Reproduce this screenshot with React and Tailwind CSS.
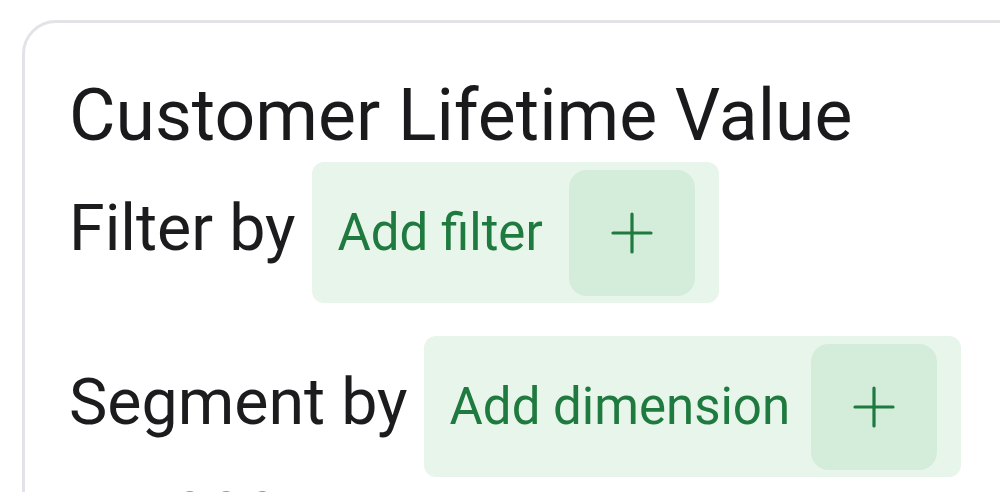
import React from 'react';

const PlusIcon = () => (
  <svg width="42" height="42" viewBox="0 0 42 42" fill="none" stroke="#1f7a3f" strokeWidth="3.2" strokeLinecap="round">
    <line x1="21" y1="2" x2="21" y2="40" />
    <line x1="2" y1="21" x2="40" y2="21" />
  </svg>
);

const AddPill = ({ label, gap }) => (
  <button className={`flex items-center h-[141px] pl-[26px] pr-[24px] rounded-[12px] bg-[#e8f5eb] ${gap}`}>
    <span className="text-[51px] leading-none text-[#1f7a3f]">{label}</span>
    <span className="flex items-center justify-center w-[126px] h-[126px] rounded-[18px] bg-[#d4ecda]">
      <PlusIcon />
    </span>
  </button>
);

const Row = ({ label, action, gap, className }) => (
  <div className={`flex items-baseline gap-[16px] ${className}`}>
    <span className="text-[64.5px] leading-[76px] text-[#1c1c1f]">{label}</span>
    <AddPill label={action} gap={gap} />
  </div>
);

export default function App() {
  return (
    <div className="w-[1000px] h-[492px] overflow-hidden bg-white font-['Roboto',sans-serif]">
      <div className="ml-[22px] mt-[20px] w-[1100px] h-[600px] rounded-[34px] border-[3px] border-[#e2e3e6] pl-[44px] pt-[50px]">
        <h1 className="text-[71.5px] leading-[85px] text-[#1a1a1d]">Customer Lifetime Value</h1>
        <Row label="Filter by" action="Add filter" gap="gap-[26px]" className="mt-[4px]" />
        <Row label="Segment by" action="Add dimension" gap="gap-[21px]" className="mt-[33px]" />
        <div className="mt-[1px] pl-[18px] text-[64.5px] leading-[76px] text-[#1c1c1f]">&lt; 1000</div>
      </div>
    </div>
  );
}
